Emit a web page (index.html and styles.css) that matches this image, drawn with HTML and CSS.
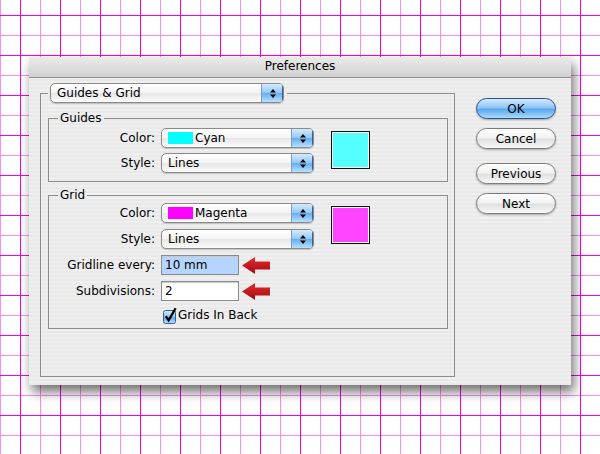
FILE: index.html
```html
<!DOCTYPE html>
<html lang="en">
<head>
    <meta charset="UTF-8">
    <title>Preferences</title>
    <link rel="stylesheet" href="styles.css">
</head>
<body>

<div class="window">
    <div class="titlebar">Preferences</div>
    <div class="content">
        <fieldset class="panel">
            <legend class="panel-legend">
                <div class="popup popup-wide">
                    <span class="popup-text">Guides &amp; Grid</span>
                    <span class="popup-arrows"><svg width="6" height="11" viewBox="0 0 6 11"><path d="M3 1 L6 4.5 L0 4.5 Z M0 6.5 L6 6.5 L3 10 Z" fill="#000"/></svg></span>
                </div>
            </legend>

            <fieldset class="group group-guides">
                <legend>Guides</legend>
                <div class="group-grid">
                    <span class="field-label">Color:</span>
                    <div class="popup">
                        <span class="popup-text"><span class="chip chip-cyan"></span>Cyan</span>
                        <span class="popup-arrows"><svg width="6" height="11" viewBox="0 0 6 11"><path d="M3 1 L6 4.5 L0 4.5 Z M0 6.5 L6 6.5 L3 10 Z" fill="#000"/></svg></span>
                    </div>
                    <div class="swatch swatch-cyan"></div>
                    <span class="field-label">Style:</span>
                    <div class="popup">
                        <span class="popup-text">Lines</span>
                        <span class="popup-arrows"><svg width="6" height="11" viewBox="0 0 6 11"><path d="M3 1 L6 4.5 L0 4.5 Z M0 6.5 L6 6.5 L3 10 Z" fill="#000"/></svg></span>
                    </div>
                </div>
            </fieldset>

            <fieldset class="group group-grid-settings">
                <legend>Grid</legend>
                <div class="group-grid grid-rows">
                    <span class="field-label">Color:</span>
                    <div class="popup">
                        <span class="popup-text"><span class="chip chip-magenta"></span>Magenta</span>
                        <span class="popup-arrows"><svg width="6" height="11" viewBox="0 0 6 11"><path d="M3 1 L6 4.5 L0 4.5 Z M0 6.5 L6 6.5 L3 10 Z" fill="#000"/></svg></span>
                    </div>
                    <div class="swatch swatch-magenta"></div>
                    <span class="field-label">Style:</span>
                    <div class="popup">
                        <span class="popup-text">Lines</span>
                        <span class="popup-arrows"><svg width="6" height="11" viewBox="0 0 6 11"><path d="M3 1 L6 4.5 L0 4.5 Z M0 6.5 L6 6.5 L3 10 Z" fill="#000"/></svg></span>
                    </div>

                    <span class="field-label">Gridline every:</span>
                    <div class="field-wrap">
                        <span class="textfield selected">10 mm</span>
                        <svg class="pointer" width="28" height="17" viewBox="0 0 28 17">
                            <defs><linearGradient id="ra1" x1="0" y1="0" x2="0" y2="1"><stop offset="0" stop-color="#e42a2f"/><stop offset="1" stop-color="#a20c12"/></linearGradient></defs>
                            <path d="M0 8.5 L13 0 L13 4.5 L28 4.5 L28 12.5 L13 12.5 L13 17 Z" fill="url(#ra1)"/>
                        </svg>
                    </div>

                    <span class="field-label">Subdivisions:</span>
                    <div class="field-wrap">
                        <span class="textfield">2</span>
                        <svg class="pointer" width="28" height="17" viewBox="0 0 28 17">
                            <defs><linearGradient id="ra2" x1="0" y1="0" x2="0" y2="1"><stop offset="0" stop-color="#e42a2f"/><stop offset="1" stop-color="#a20c12"/></linearGradient></defs>
                            <path d="M0 8.5 L13 0 L13 4.5 L28 4.5 L28 12.5 L13 12.5 L13 17 Z" fill="url(#ra2)"/>
                        </svg>
                    </div>

                    <div class="check-row">
                        <svg width="16" height="17" viewBox="0 0 16 17">
                            <defs><linearGradient id="cb" x1="0" y1="0" x2="0" y2="1"><stop offset="0" stop-color="#d8edfd"/><stop offset=".5" stop-color="#8cc4f4"/><stop offset=".55" stop-color="#5fa8eb"/><stop offset="1" stop-color="#bce4ff"/></linearGradient></defs>
                            <rect x="1.5" y="3.5" width="12" height="13" rx="2" fill="url(#cb)" stroke="#3a5d96"/>
                            <path d="M3.8 9.2 L6.6 13.4 L13.6 1.2" fill="none" stroke="#000" stroke-width="2.3"/>
                        </svg>
                        <span>Grids In Back</span>
                    </div>
                </div>
            </fieldset>
        </fieldset>

        <div class="buttons">
            <button class="btn btn-ok">OK</button>
            <button class="btn btn-cancel">Cancel</button>
            <button class="btn btn-prev">Previous</button>
            <button class="btn btn-next">Next</button>
        </div>
    </div>
</div>

</body>
</html>
```

FILE: styles.css
```css
body {
    margin: 0;
    height: 454px;
    overflow: hidden;
    font-family: "DejaVu Sans", sans-serif;
    font-size: 12px;
    color: #000;
    background-color: #fff;
    background-image:
        linear-gradient(to right, transparent 20px, #f000f0 20px, #f000f0 21px, transparent 21px),
        linear-gradient(to bottom, transparent 15px, #f000f0 15px, #f000f0 16px, transparent 16px),
        linear-gradient(to right, #f68cf6 1px, transparent 1px),
        linear-gradient(to bottom, transparent 35px, #f68cf6 35px, #f68cf6 36px, transparent 36px);
    background-size: 40px 40px;
}

.window {
    width: 542px;
    height: 328px;
    margin: 57px 0 0 29px;
    background: repeating-linear-gradient(to bottom, #efefef 0, #efefef 2px, #e9e9e9 2px, #e9e9e9 4px);
    box-shadow: 3px 7px 11px rgba(0, 0, 0, 0.55);
}

.titlebar {
    height: 20px;
    line-height: 19px;
    text-align: center;
    background: linear-gradient(#ebebeb, #d1d1d1);
    border-bottom: 1px solid #8c8c8c;
}

.content {
    display: flex;
    align-items: flex-start;
}

/* big box with the page popup as its legend */
.panel {
    box-sizing: border-box;
    width: 415px;
    height: 294px;
    margin: 5px 0 0 11px;
    padding: 0 6px 0 7px;
    border: 1px solid #8d8d8d;
    min-width: 0;
}
.panel-legend {
    padding: 0 3px 0 2px;
}

.group {
    box-sizing: border-box;
    width: 400px;
    margin: 8px 0 0;
    padding: 0 0 8px;
    border: 1px solid #8d8d8d;
    min-width: 0;
}
.group legend {
    margin-left: 9px;
    padding: 0 2px;
    line-height: 15px;
}
.group-grid-settings {
    margin-top: 6px;
    padding-bottom: 5px;
}

.group-grid {
    display: grid;
    grid-template-columns: 106px 153px 1fr;
    column-gap: 6px;
    row-gap: 5px;
    grid-auto-rows: 20px;
    margin-top: 2px;
}
.grid-rows {
    margin-top: 0;
    row-gap: 6px;
    grid-template-rows: 20px 20px 20px 20px 16px;
}

.field-label {
    text-align: right;
    line-height: 20px;
}

.popup {
    display: flex;
    height: 20px;
    box-sizing: border-box;
    border: 1px solid #8a8a8a;
    border-radius: 5px;
    background: linear-gradient(#ffffff, #f4f4f4 50%, #e7e7e7 52%, #fbfbfb);
    box-shadow: 0 1px 1px rgba(0, 0, 0, 0.18);
    overflow: hidden;
}
.popup-wide {
    width: 234px;
}
.popup-text {
    flex: 1;
    display: flex;
    align-items: center;
    padding-left: 6px;
    white-space: nowrap;
}
.popup-arrows {
    width: 21px;
    display: flex;
    align-items: center;
    justify-content: center;
    background: linear-gradient(#d4eafd, #95c9f5 48%, #66aeee 52%, #b7e1ff);
    border-left: 1px solid #7d9cc8;
    box-shadow: inset -1px 0 0 #3f5f99;
}

.chip {
    display: inline-block;
    width: 25px;
    height: 12px;
    margin-right: 2px;
}
.chip-cyan {
    background: #00ffff;
}
.chip-magenta {
    background: #ff00ff;
}

.swatch {
    grid-column: 3;
    grid-row: 1 / span 2;
    width: 39px;
    height: 38px;
    box-sizing: border-box;
    margin: 3px 0 0 11px;
    border: 1px solid #111;
    box-shadow: inset 0 0 0 1px #fff;
}
.swatch-cyan {
    background: #55ffff;
}
.swatch-magenta {
    background: #ff44ff;
}

.field-wrap {
    grid-column: 2 / span 2;
    display: flex;
    align-items: center;
    gap: 3px;
}
.textfield {
    box-sizing: border-box;
    width: 78px;
    height: 20px;
    line-height: 18px;
    padding-left: 3px;
    border: 1px solid #8b8b8b;
    box-shadow: inset 0 1px 0 #c9c9c9;
    background: #fff;
}
.textfield.selected {
    background: #b5d5ff;
}

.check-row {
    grid-column: 2 / span 2;
    display: flex;
    align-items: center;
    gap: 0;
    margin-left: 1px;
}

.buttons {
    display: flex;
    flex-direction: column;
    width: 80px;
    margin: 20px 0 0 21px;
}
.btn {
    height: 21px;
    box-sizing: border-box;
    padding: 0;
    font: inherit;
    color: #000;
    border: 1px solid #7b7b7b;
    border-radius: 11px;
    background: linear-gradient(#fdfdfd, #f2f2f2 45%, #e1e1e1 55%, #f8f8f8);
    box-shadow: 0 1px 2px rgba(0, 0, 0, 0.3);
}
.btn-ok {
    border-color: #2d4f8f;
    background: linear-gradient(#d3e9fd, #8ec6f5 45%, #5ba7ec 55%, #a9dcff);
}
.btn-cancel {
    margin-top: 9px;
}
.btn-prev {
    margin-top: 14px;
}
.btn-next {
    margin-top: 9px;
}
```
